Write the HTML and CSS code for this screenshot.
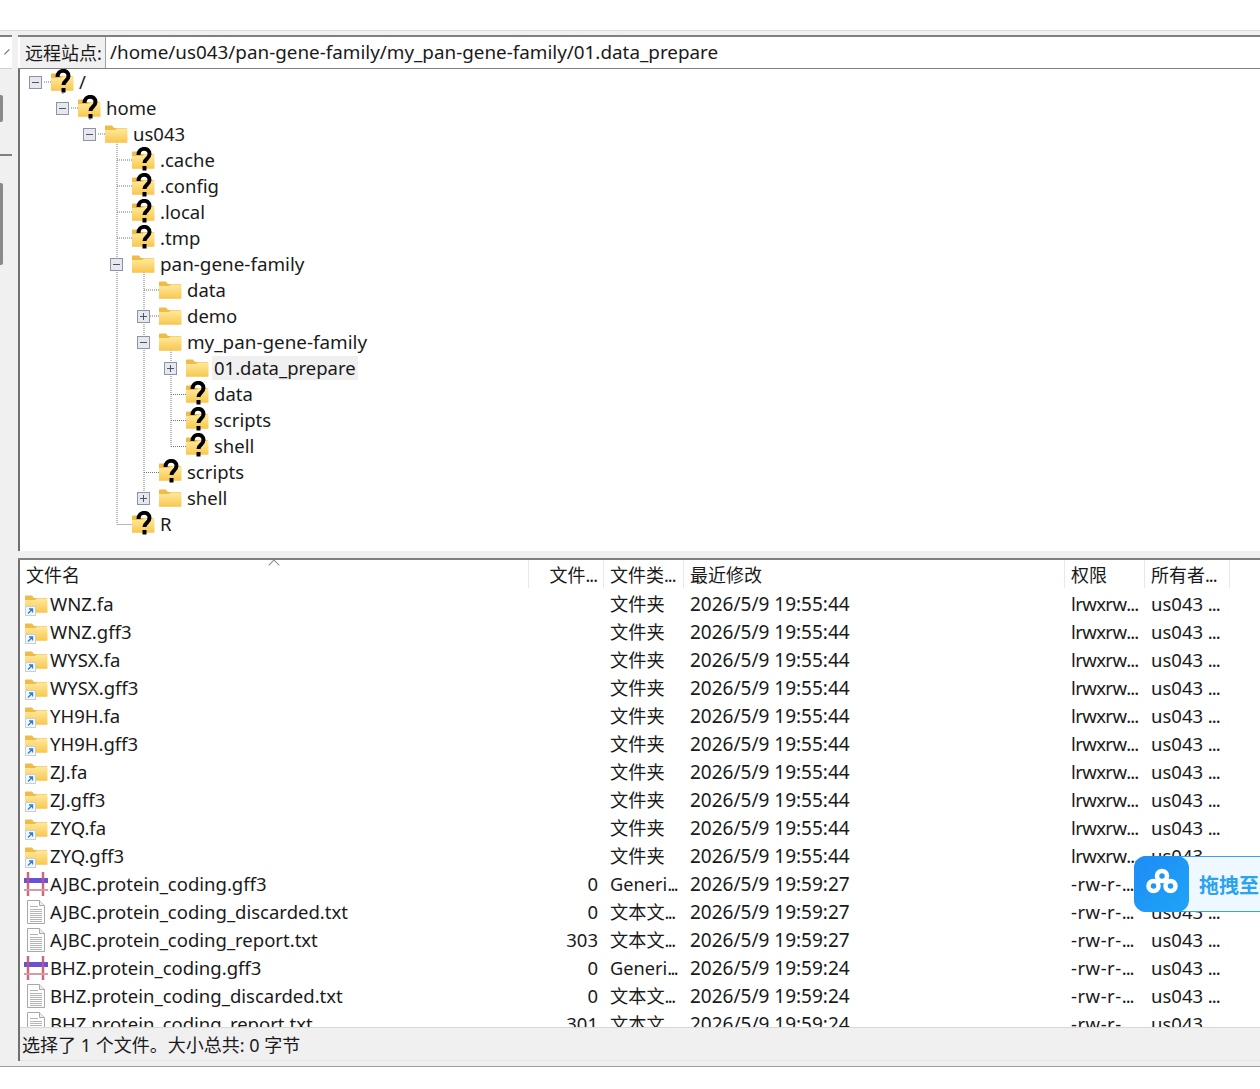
FILE: index.html
```html
<!DOCTYPE html>
<html lang="zh-CN">
<head>
    <meta charset="UTF-8">
    <title>FileZilla</title>
    <link rel="stylesheet" href="styles.css">
</head>
<body>
    <svg class="defs" width="0" height="0">
        <defs>
            <linearGradient id="folderFill" x1="0" y1="0" x2="0" y2="1">
                <stop offset="0" stop-color="#ffe99c"/>
                <stop offset="1" stop-color="#f7c850"/>
            </linearGradient>
            <symbol id="folder" viewBox="0 0 24 18">
                <path d="M1 3V1.500C1 .8 1.500.5 2 .5h6l2 2.500h13v14.500H1z" fill="#f0bc48"/>
                <path d="M1 5h10l2-1.500h10.500V17.500H1z" fill="url(#folderFill)"/>
            </symbol>
            <symbol id="unknown" viewBox="0 0 24 26">
                <use href="#folder" x="0" y="4" width="24" height="18"/>
                <path d="M7.500 8c0-8 11-8 11-1 0 5-5 4.500-5 9" fill="none" stroke="#000" stroke-width="4"/>
                <rect x="11.500" y="19" width="4" height="4.500" fill="#000"/>
            </symbol>
            <symbol id="minus" viewBox="0 0 13 13">
                <rect x=".5" y=".5" width="12" height="12" fill="#e6e8ee" stroke="#8a94a6"/>
                <path d="M3 6.500h7" stroke="#4a5568"/>
            </symbol>
            <symbol id="plus" viewBox="0 0 13 13">
                <rect x=".5" y=".5" width="12" height="12" fill="#e6e8ee" stroke="#8a94a6"/>
                <path d="M3 6.500h7M6.500 3v7" stroke="#4a5568"/>
            </symbol>
            <symbol id="link" viewBox="0 0 24 24">
                <use href="#folder" x="0" y="3" width="24" height="18"/>
                <rect x="1.500" y="14.500" width="10" height="9" fill="#f4f8fc" stroke="#c4d0dc"/>
                <path d="M4 21.500l4-4M5 17h3.500v3.500" fill="none" stroke="#2b7fc2" stroke-width="1.300"/>
            </symbol>
            <symbol id="gff" viewBox="0 0 24 24">
                <path d="M4 0v24M19 0v24" stroke="#c86a7a" stroke-width="2.500"/>
                <path d="M0 18h24" stroke="#d89aa6" stroke-width="2"/>
                <rect x="0" y="6" width="24" height="5" fill="#6a50d8"/>
                <path d="M4 6v5M19 6v5" stroke="#a85a90" stroke-width="2.500"/>
            </symbol>
            <symbol id="doc" viewBox="0 0 18 24">
                <path d="M.5.500h12l5 5v18H.5z" fill="#fdfdfd" stroke="#a8a8a8"/>
                <path d="M12.500.500v5h5" fill="#eee" stroke="#a8a8a8"/>
                <path d="M3 6.500h8M3 9.500h12M3 11.500h12M3 13.500h12M3 15.500h12M3 17.500h12M3 19.500h12M3 21.500h12" stroke="#b4b4b4"/>
            </symbol>
        </defs>
    </svg>

    <div class="window">
        <div class="panes">
            <div class="side">
                <div class="side-top"><span class="side-arrow"></span></div>
                <div class="side-mid"><span class="side-thumb"></span></div>
                <div class="side-low"><span class="side-thumb tall"></span></div>
            </div>

            <div class="main">
                <div class="path-bar">
                    <label class="path-label">远程站点:</label>
                    <span class="path-value">/home/us043/pan-gene-family/my_pan-gene-family/01.data_prepare</span>
                </div>

                <div class="tree">
                    <!-- dotted guides of the tree -->
                    <svg class="tree-lines" width="400" height="482">
                        <g fill="none" stroke="#777" stroke-dasharray="1 1">
                            <path d="M24 13h7M51 39h7M78 65h7"/>
                            <path d="M43 20v6M70 46v6"/>
                            <path d="M97 65v390.500H112M97 91h15M97 117h15M97 143h15M97 169h15M97 195h5"/>
                            <path d="M124 195v234.500M124 221h15M124 247h15M124 273h5M124 403.500h15M124 429.500h5"/>
                            <path d="M151 273v104.500M151 299h5M151 325.500h15M151 351.500h15M151 377.500h15"/>
                        </g>
                    </svg>

                    <div class="node lv0"><svg class="toggle"><use href="#minus"/></svg><svg class="node-icon"><use href="#unknown"/></svg><span>/</span></div>
                    <div class="node lv1"><svg class="toggle"><use href="#minus"/></svg><svg class="node-icon"><use href="#unknown"/></svg><span>home</span></div>
                    <div class="node lv2"><svg class="toggle"><use href="#minus"/></svg><svg class="node-icon"><use href="#folder" y="4" height="18"/></svg><span>us043</span></div>
                    <div class="node lv3"><i class="toggle"></i><svg class="node-icon"><use href="#unknown"/></svg><span>.cache</span></div>
                    <div class="node lv3"><i class="toggle"></i><svg class="node-icon"><use href="#unknown"/></svg><span>.config</span></div>
                    <div class="node lv3"><i class="toggle"></i><svg class="node-icon"><use href="#unknown"/></svg><span>.local</span></div>
                    <div class="node lv3"><i class="toggle"></i><svg class="node-icon"><use href="#unknown"/></svg><span>.tmp</span></div>
                    <div class="node lv3"><svg class="toggle"><use href="#minus"/></svg><svg class="node-icon"><use href="#folder" y="4" height="18"/></svg><span class="long">pan-gene-family</span></div>
                    <div class="node lv4"><i class="toggle"></i><svg class="node-icon"><use href="#folder" y="4" height="18"/></svg><span>data</span></div>
                    <div class="node lv4"><svg class="toggle"><use href="#plus"/></svg><svg class="node-icon"><use href="#folder" y="4" height="18"/></svg><span>demo</span></div>
                    <div class="node lv4"><svg class="toggle"><use href="#minus"/></svg><svg class="node-icon"><use href="#folder" y="4" height="18"/></svg><span class="long">my_pan-gene-family</span></div>
                    <div class="node lv5"><svg class="toggle"><use href="#plus"/></svg><svg class="node-icon"><use href="#folder" y="4" height="18"/></svg><span class="current">01.data_prepare</span></div>
                    <div class="node lv5"><i class="toggle"></i><svg class="node-icon"><use href="#unknown"/></svg><span>data</span></div>
                    <div class="node lv5"><i class="toggle"></i><svg class="node-icon"><use href="#unknown"/></svg><span>scripts</span></div>
                    <div class="node lv5"><i class="toggle"></i><svg class="node-icon"><use href="#unknown"/></svg><span>shell</span></div>
                    <div class="node lv4"><i class="toggle"></i><svg class="node-icon"><use href="#unknown"/></svg><span>scripts</span></div>
                    <div class="node lv4"><svg class="toggle"><use href="#plus"/></svg><svg class="node-icon"><use href="#folder" y="4" height="18"/></svg><span>shell</span></div>
                    <div class="node lv3"><i class="toggle"></i><svg class="node-icon"><use href="#unknown"/></svg><span>R</span></div>
                </div>

                <div class="sash"></div>

                <div class="list">
                    <div class="list-head">
                        <div class="col name">文件名<span class="sort-arrow"></span></div>
                        <div class="col size">文件<span class="dots">...</span></div>
                        <div class="col type">文件类<span class="dots">...</span></div>
                        <div class="col date">最近修改</div>
                        <div class="col perm">权限</div>
                        <div class="col owner">所有者<span class="dots">...</span></div>
                    </div>

                    <div class="list-body" id="rows"></div>
                </div>

                <div class="status">选择了 1 个文件。大小总共: 0 字节</div>
            </div>
        </div>
    </div>

    <div class="baidu">
        <div class="baidu-logo">
            <svg width="36" height="32" viewBox="0 0 36 32">
                <g fill="none" stroke="#fff" stroke-width="4.500">
                    <circle cx="18" cy="8" r="5"/>
                    <circle cx="9.500" cy="18" r="5"/>
                    <circle cx="26.500" cy="18" r="5"/>
                </g>
            </svg>
        </div>
        <span class="baidu-text">拖拽至</span>
    </div>

    <script>
        var DOTS = '<span class="dots">...</span>';
        var links = ['WNZ.fa', 'WNZ.gff3', 'WYSX.fa', 'WYSX.gff3', 'YH9H.fa', 'YH9H.gff3', 'ZJ.fa', 'ZJ.gff3', 'ZYQ.fa', 'ZYQ.gff3'];
        var files = [
            ['gff', 'AJBC.protein_coding.gff3', '0', 'Generi', '2026/5/9 19:59:27'],
            ['doc', 'AJBC.protein_coding_discarded.txt', '0', '文本文', '2026/5/9 19:59:27'],
            ['doc', 'AJBC.protein_coding_report.txt', '303', '文本文', '2026/5/9 19:59:27'],
            ['gff', 'BHZ.protein_coding.gff3', '0', 'Generi', '2026/5/9 19:59:24'],
            ['doc', 'BHZ.protein_coding_discarded.txt', '0', '文本文', '2026/5/9 19:59:24'],
            ['doc', 'BHZ.protein_coding_report.txt', '301', '文本文', '2026/5/9 19:59:24']
        ];

        function rowHtml(icon, name, size, type, date, perm, permClass) {
            return '<div class="row">' +
                '<div class="col name"><svg class="file-icon ' + icon + '"><use href="#' + icon + '"/></svg>' + name + '</div>' +
                '<div class="col size">' + size + '</div>' +
                '<div class="col type">' + type + '</div>' +
                '<div class="col date">' + date + '</div>' +
                '<div class="col perm"><span class="' + permClass + '">' + perm + '</span>' + DOTS + '</div>' +
                '<div class="col owner">us043 ' + DOTS + '</div>' +
                '</div>';
        }

        var html = '';
        links.forEach(function (name) {
            html += rowHtml('link', name, '', '文件夹', '2026/5/9 19:55:44', 'lrwxrw', 'perm-link');
        });
        files.forEach(function (f) {
            html += rowHtml(f[0], f[1], f[2], f[3] + DOTS, f[4], '-rw-r-', 'perm-file');
        });
        document.getElementById('rows').innerHTML = html;
    </script>
</body>
</html>
```

FILE: styles.css
```css
html, body {
    margin: 0;
    padding: 0;
}

body {
    width: 1260px;
    height: 1089px;
    overflow: hidden;
    background-color: #fff;
    color: #1a1a1a;
    font-family: "Noto Sans", "Noto Sans CJK SC", sans-serif;
    font-size: 18.5px;
    position: relative;
}

.defs {
    position: absolute;
}

.window {
    margin-top: 30px;
    height: 1035px;
    border-top: 1px solid #dcdcdc;
    border-bottom: 1px solid #a0a0a0;
    background-color: #f0f0f0;
}

.panes {
    display: flex;
    height: 100%;
    padding-top: 4px;
    box-sizing: border-box;
}

/* left strip, cut off by the screenshot */
.side {
    width: 12px;
    margin-right: 6px;
    display: flex;
    flex-direction: column;
    border-top: 2px solid #808080;
}

.side-top {
    height: 31px;
    background-color: #fff;
    border-bottom: 1px solid #d0d0d0;
    position: relative;
}

.side-arrow {
    position: absolute;
    left: 2px;
    top: 11px;
    width: 7px;
    height: 4px;
    border-bottom: 1px solid #666;
    transform: rotate(-45deg);
}

.side-mid {
    height: 87px;
    border-bottom: 2px solid #808080;
    padding-top: 26px;
    box-sizing: border-box;
}

.side-low {
    flex: 1;
    padding-top: 27px;
}

.side-thumb {
    display: block;
    width: 3px;
    height: 27px;
    background-color: #8a8a8a;
    border-radius: 0 2px 2px 0;
}

.side-thumb.tall {
    height: 82px;
}

.main {
    flex: 1;
    display: flex;
    flex-direction: column;
    min-width: 0;
    border-left: 2px solid #707070;
    margin-bottom: 5px;
}

.path-bar {
    height: 34px;
    display: flex;
    border-top: 2px solid #808080;
    border-bottom: 1px solid #808080;
    background-color: #fff;
    margin-left: -2px;
    box-sizing: border-box;
}

.path-label {
    width: 86px;
    margin-left: 2px;
    padding-left: 5px;
    line-height: 33px;
    box-sizing: border-box;
    background-color: #f0f0f0;
    border-right: 1px solid #a0a0a0;
    font-size: 18px;
}

.path-value {
    padding-left: 4px;
    line-height: 31px;
    font-size: 18.85px;
    white-space: nowrap;
}

.tree {
    height: 482px;
    background-color: #fff;
    position: relative;
}

.tree-lines {
    position: absolute;
    left: 0;
    top: 0;
}

.node {
    height: 26px;
    display: flex;
    align-items: center;
    position: relative;
    white-space: nowrap;
}

.lv0 { padding-left: 9px; }
.lv1 { padding-left: 36px; }
.lv2 { padding-left: 63px; }
.lv3 { padding-left: 90px; }
.lv4 { padding-left: 117px; }
.lv5 { padding-left: 144px; }

.toggle {
    width: 13px;
    height: 13px;
    margin-right: 8px;
    flex: none;
}

.node-icon {
    width: 24px;
    height: 26px;
    margin-right: 3px;
    flex: none;
}

.node span {
    padding: 0 2px;
    line-height: 24px;
}

.node .long {
    font-size: 18.85px;
}

.node .current {
    background-color: #f0f0f0;
}

.sash {
    height: 7px;
    background-color: #f0f0f0;
    border-bottom: 2px solid #808080;
    margin-left: -2px;
}

.list {
    flex: 1;
    min-height: 0;
    display: flex;
    flex-direction: column;
    background-color: #fff;
    overflow: hidden;
}

.list-head {
    height: 30px;
    display: flex;
    flex: none;
    line-height: 30px;
    font-size: 18px;
    background-color: #fff;
}

.list-head .col {
    height: 28px;
    border-right: 1px solid #e8e8e8;
    box-sizing: border-box;
}

.col {
    flex: none;
    white-space: nowrap;
    overflow: hidden;
    padding-left: 6px;
    box-sizing: border-box;
}

.col.name { width: 509px; position: relative; }
.col.size { width: 75px; text-align: right; padding-right: 6px; padding-left: 0; }
.col.type { width: 80px; }
.col.date { width: 381px; }
.col.perm { width: 80px; }
.col.owner { width: 85px; }

.row .col.type { font-size: 18.2px; }
.row .col.date { font-size: 19px; }

.dots {
    letter-spacing: -1px;
}

.row .col.type .dots {
    letter-spacing: -1.6px;
}

.perm-link {
    letter-spacing: -.6px;
}

.perm-file {
    letter-spacing: .5px;
}

.sort-arrow {
    position: absolute;
    left: 250px;
    top: 1px;
    width: 7px;
    height: 7px;
    border-top: 1px solid #888;
    border-left: 1px solid #888;
    transform: rotate(45deg);
}

.list-body {
    flex: 1;
    min-height: 0;
    overflow: hidden;
}

.row {
    height: 28px;
    display: flex;
    line-height: 28px;
}

.row .col.name {
    display: flex;
    align-items: center;
    padding-left: 4px;
}

.file-icon {
    width: 24px;
    height: 24px;
    margin-right: 2px;
    flex: none;
}

.file-icon.doc {
    width: 18px;
    margin-left: 3px;
    margin-right: 5px;
}

.status {
    height: 32px;
    line-height: 34px;
    flex: none;
    padding-left: 2px;
    background-color: #f0f0f0;
    border-top: 1px solid #d8d8d8;
    border-bottom: 1px solid #e4e4e4;
    font-size: 18px;
}

/* baidu netdisk drag widget */
.baidu {
    position: absolute;
    left: 1134px;
    top: 856px;
    width: 140px;
    height: 56px;
    display: flex;
    align-items: center;
    background-color: #eff8fe;
    border: 1px solid #3aa0ea;
    border-radius: 12px;
    box-sizing: border-box;
}

.baidu-logo {
    width: 55px;
    height: 56px;
    margin: -1px 0 -1px -1px;
    display: flex;
    align-items: center;
    justify-content: center;
    background: linear-gradient(135deg, #1e8cf5, #1ea4f8);
    border-radius: 12px;
    flex: none;
}

.baidu-text {
    margin-left: 10px;
    font-size: 20px;
    font-weight: 700;
    color: #2aa3f0;
    white-space: nowrap;
}
```
